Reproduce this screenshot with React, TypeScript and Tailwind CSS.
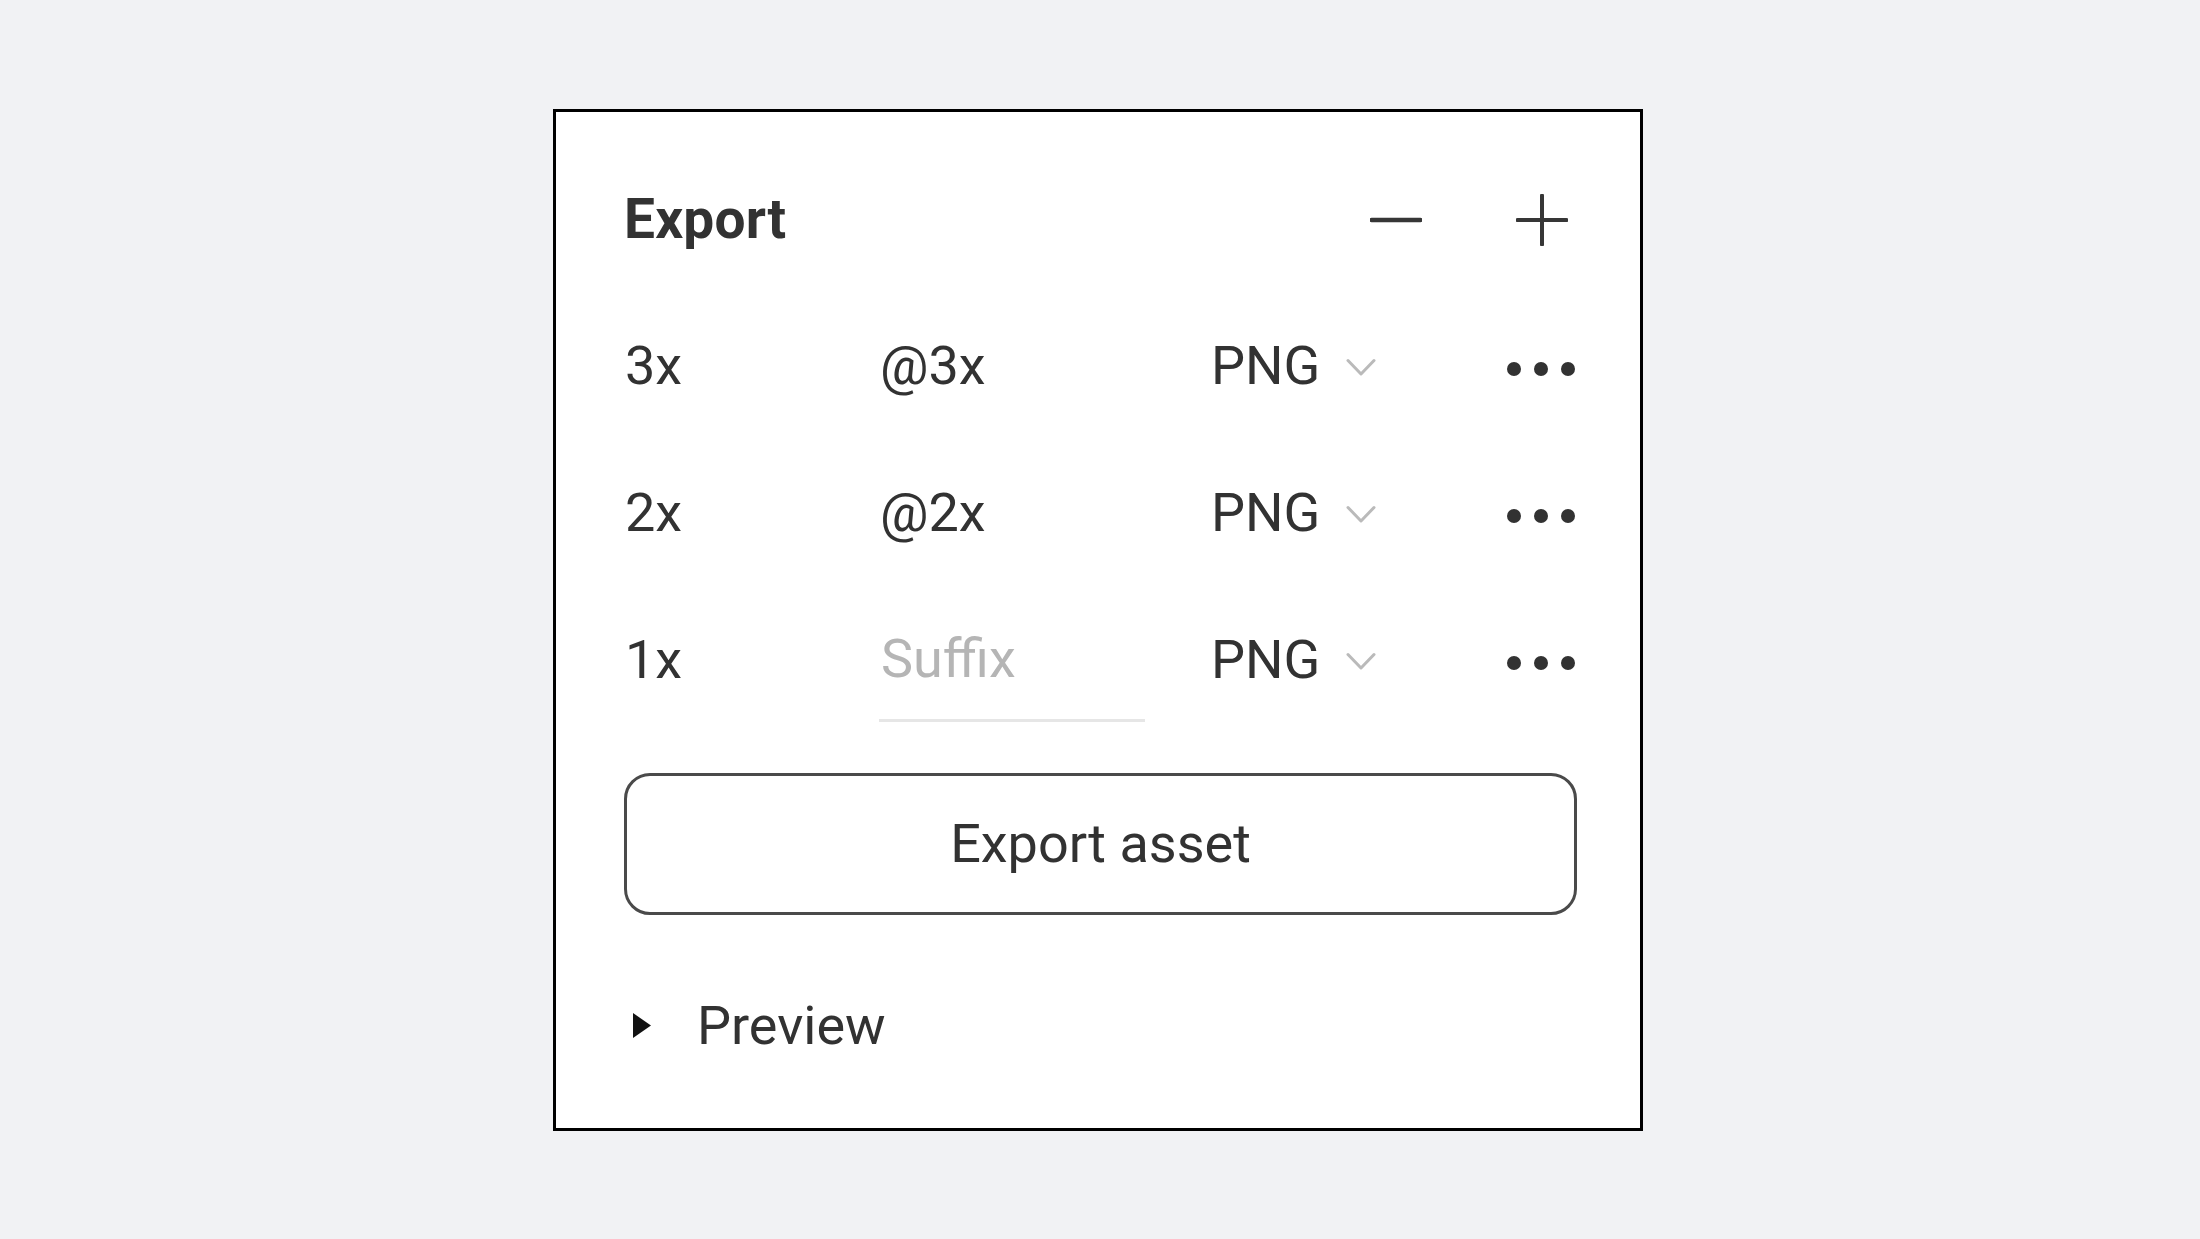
export default function App() {
  const rows = [
    { scale: "3x", suffix: "@3x" },
    { scale: "2x", suffix: "@2x" },
    { scale: "1x", suffix: "" },
  ];
  return (
    <div className="min-h-screen w-full bg-[#f1f2f4] flex items-center justify-center font-['Roboto',sans-serif] text-[#323232]">
      <div className="mr-[4px] w-[1090px] h-[1022px] bg-white border-[3px] border-black pt-[68px] pl-[68px] pr-[63px] flex flex-col">
        <div className="h-[80px] flex items-center">
          <h2 className="flex-1 text-[55px] leading-none font-bold tracking-[0.2px]">Export</h2>
          <button aria-label="Remove" className="w-[52px] h-[52px] flex items-center justify-center">
            <svg width="52" height="52" viewBox="0 0 52 52">
              <line x1="1.5" y1="26" x2="50.5" y2="26" stroke="#363636" strokeWidth="4.5" strokeLinecap="round" />
            </svg>
          </button>
          <button aria-label="Add" className="ml-[94px] mr-[9px] w-[52px] h-[52px] flex items-center justify-center">
            <svg width="52" height="52" viewBox="0 0 52 52">
              <line x1="1.5" y1="26" x2="50.5" y2="26" stroke="#363636" strokeWidth="4" strokeLinecap="round" />
              <line x1="26" y1="1.5" x2="26" y2="50.5" stroke="#363636" strokeWidth="4" strokeLinecap="round" />
            </svg>
          </button>
        </div>

        <div className="mt-[33px] flex flex-col">
          {rows.map((r) => (
            <div key={r.scale} className="h-[147px] flex items-center text-[54px] leading-none">
              <div className="w-[255px] pl-[1px]">{r.scale}</div>
              <div className="w-[332px]">
                {r.suffix ? (
                  <div className="pl-[1px]">{r.suffix}</div>
                ) : (
                  <div className="w-[266px] h-[123px] flex items-center border-b-[3px] border-[#e6e6e6] pl-[2px] text-[#b5b5b5]">
                    Suffix
                  </div>
                )}
              </div>
              <div className="flex-1 flex items-center">
                <span>PNG</span>
                <svg className="ml-[26px] mt-[4px]" width="30" height="20" viewBox="0 0 30 20">
                  <polyline points="2,2.5 15,16 28,2.5" fill="none" stroke="#bababa" strokeWidth="3" strokeLinecap="round" strokeLinejoin="round" />
                </svg>
              </div>
              <div className="flex items-center gap-[13px] mt-[5px] mr-[2px]">
                <span className="block w-[14px] h-[14px] rounded-full bg-[#323232]" />
                <span className="block w-[14px] h-[14px] rounded-full bg-[#323232]" />
                <span className="block w-[14px] h-[14px] rounded-full bg-[#323232]" />
              </div>
            </div>
          ))}
        </div>

        <button className="mt-[39px] h-[142px] w-full border-[3px] border-[#4a4a4a] rounded-[26px] flex items-center justify-center text-[54px] leading-none text-[#323232]">
          Export asset
        </button>

        <div className="mt-[71px] h-[80px] flex items-center">
          <svg className="ml-[9px]" width="18" height="25" viewBox="0 0 18 25">
            <polygon points="0,0 18,12.5 0,25" fill="#111111" />
          </svg>
          <span className="ml-[46px] text-[54px] leading-none">Preview</span>
        </div>
      </div>
    </div>
  );
}
